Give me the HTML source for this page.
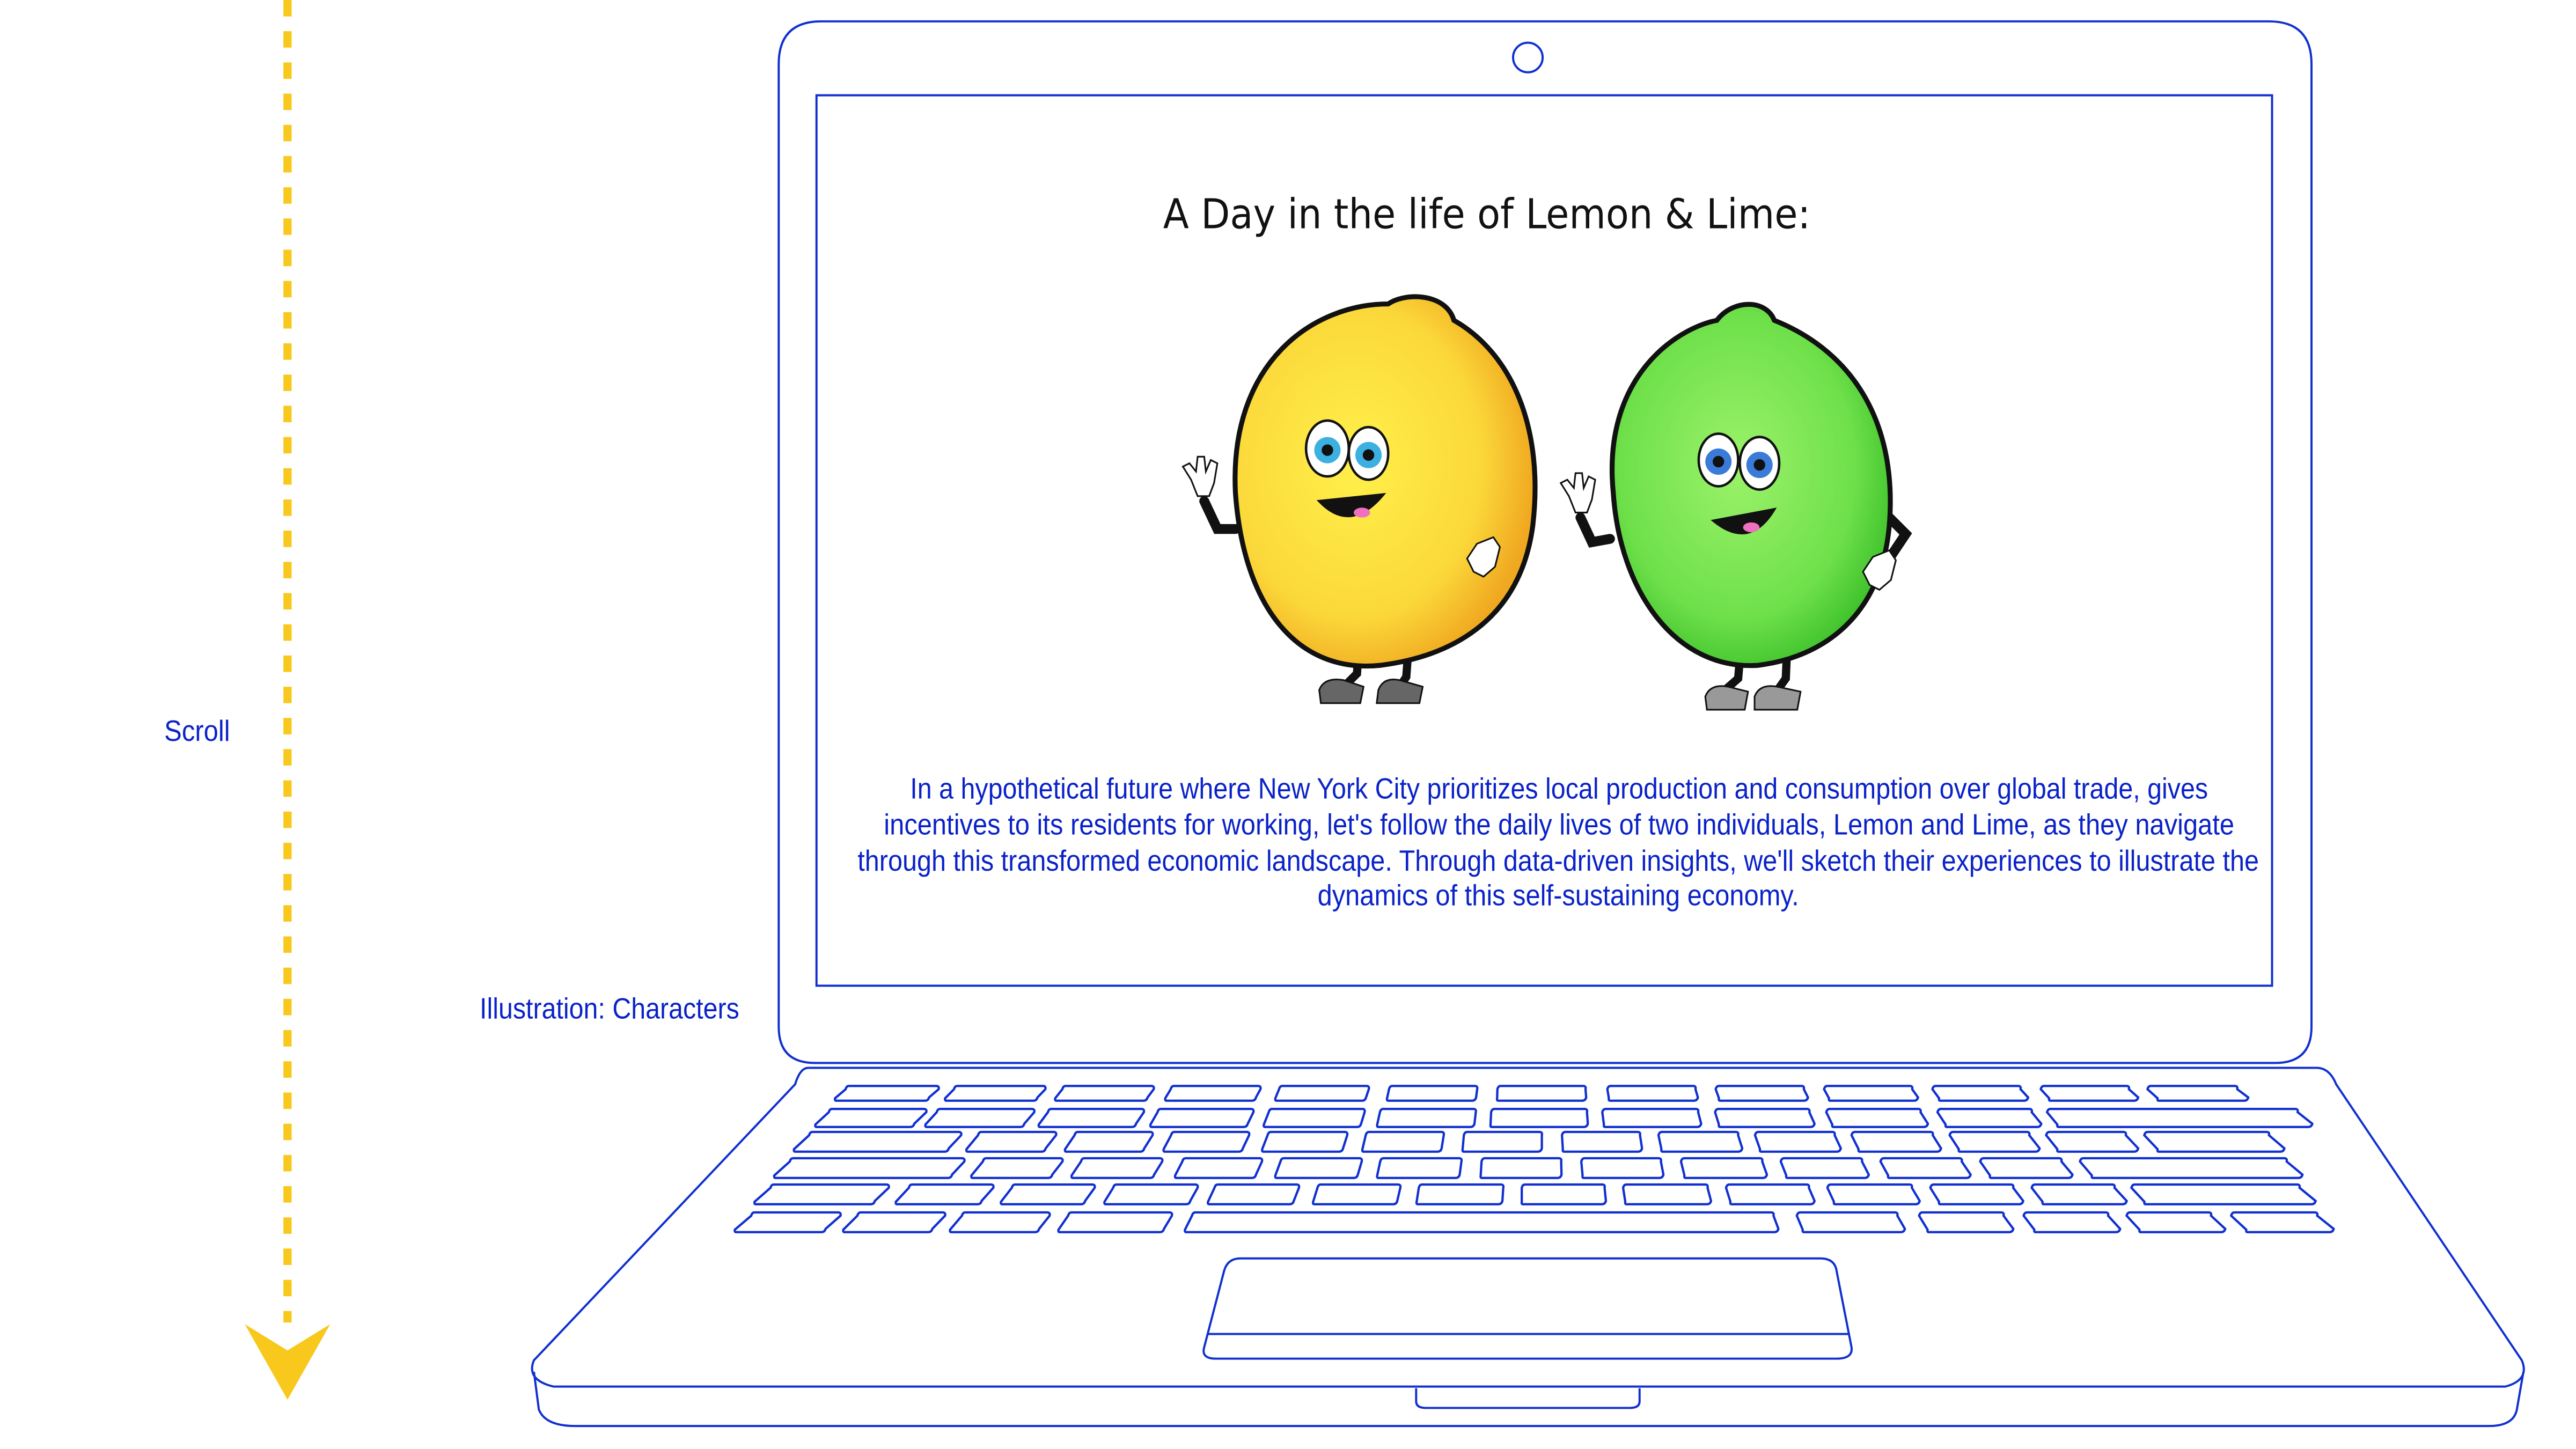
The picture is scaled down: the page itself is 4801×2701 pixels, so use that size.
<!DOCTYPE html>
<html><head><meta charset="utf-8"><style>
html,body{margin:0;padding:0;background:#fff;}
svg{display:block;}
</style></head><body>
<svg id="s" width="4801" height="2701" viewBox="0 0 1568 882" preserveAspectRatio="none" xmlns="http://www.w3.org/2000/svg">
<defs>
<radialGradient id="lg" cx="0.4" cy="0.45" r="0.6"><stop offset="0" stop-color="#fff04a"/><stop offset="0.7" stop-color="#fbd83a"/><stop offset="1" stop-color="#f0a820"/></radialGradient>
<radialGradient id="gg" cx="0.45" cy="0.45" r="0.6"><stop offset="0" stop-color="#9cf26a"/><stop offset="0.7" stop-color="#6ee04a"/><stop offset="1" stop-color="#3cc02a"/></radialGradient>
</defs>
<line x1="175" y1="0" x2="175" y2="805" stroke="#f8c81c" stroke-width="5" stroke-dasharray="10,9"/>
<polygon points="149,806 175,822 201,806 175,852" fill="#f8c81c"/>
<g font-family="'Liberation Sans Narrow','Liberation Sans',sans-serif" fill="#0a22c8" font-size="18">
<text x="100" y="451" textLength="40" lengthAdjust="spacingAndGlyphs">Scroll</text>
<text x="292" y="620" textLength="158" lengthAdjust="spacingAndGlyphs">Illustration: Characters</text>
</g>
<g fill="none" stroke="#1030d0" stroke-width="1.3">
<path d="M500,13 H1381 Q1407,13 1407,39 V625 Q1407,647 1385,647 H496 Q474,647 474,625 V39 Q474,13 500,13Z"/>
<circle cx="930" cy="35" r="9"/>
<rect x="497" y="58" width="886" height="542"/>
<path d="M492,650 H1410 Q1418,650 1422,660 L1535,828 Q1540,840 1525,844 H337 Q320,840 325,828 L484,660 Q487,650 492,650Z"/>
<path d="M325,835 L328,858 Q332,868 350,868 H1515 Q1530,868 1532,858 L1536,835"/>
<path d="M862,845 V853 Q862,857 868,857 H992 Q998,857 998,853 V845"/>
<path d="M755,766 H1108 Q1117,766 1118,774 L1127,820 Q1128,827 1118,827 H740 Q731,827 733,820 L745,774 Q747,766 755,766Z"/>
<line x1="735" y1="812" x2="1126" y2="812"/>
<g id="keys" stroke-width="1.4"></g>
</g>
<text x="905" y="139" text-anchor="middle" font-family="'DejaVu Sans','Liberation Sans',sans-serif" font-size="25" fill="#111" textLength="394" lengthAdjust="spacingAndGlyphs">A Day in the life of Lemon &amp; Lime:</text>
<g font-family="'Liberation Sans Narrow','Liberation Sans',sans-serif" fill="#0a22c8" font-size="18">
<text x="554" y="486" textLength="790" lengthAdjust="spacingAndGlyphs">In a hypothetical future where New York City prioritizes local production and consumption over global trade, gives</text>
<text x="538" y="508" textLength="822" lengthAdjust="spacingAndGlyphs">incentives to its residents for working,  let's follow the daily lives of two individuals, Lemon and Lime, as they navigate</text>
<text x="522" y="530" textLength="853" lengthAdjust="spacingAndGlyphs">through this transformed economic landscape. Through data-driven insights, we'll sketch their experiences to illustrate the</text>
<text x="802" y="551" textLength="293" lengthAdjust="spacingAndGlyphs">dynamics of this self-sustaining economy.</text>
</g>
<g stroke="#111" stroke-linecap="round">
<path d="M733,305 L741,322 L752,322" stroke-width="6" fill="none"/>
<path d="M905,305 L918,318 L905,335" stroke-width="6" fill="none"/>
<path d="M828,380 L826,410 L818,418 M858,385 L856,412 L852,418" stroke-width="5" fill="none"/>
<path d="M752,300 C748,220 800,185 845,185 C855,178 880,178 885,195 C920,215 940,260 933,320 C925,380 880,400 840,405 C790,410 757,370 752,300Z" fill="url(#lg)" stroke-width="3"/>
<path d="M725,292 l-5,-8 l4,-2 l4,5 l1,-9 l4,0 l1,9 l3,-7 l4,2 l-2,12 l-3,8 l-7,0Z" fill="#fff" stroke-width="1"/>
<path d="M893,340 l6,-9 l10,-4 l4,6 l-3,12 l-7,6 l-6,-3Z" fill="#fff" stroke-width="1"/>
<ellipse cx="808" cy="273" rx="13" ry="17" fill="#fff" stroke-width="1.5"/>
<ellipse cx="833" cy="276" rx="12" ry="16" fill="#fff" stroke-width="1.5"/>
<circle cx="808" cy="274" r="8" fill="#3cb0e0" stroke="none"/><circle cx="833" cy="277" r="8" fill="#3cb0e0" stroke="none"/>
<circle cx="808" cy="274" r="3.5" fill="#111" stroke="none"/><circle cx="833" cy="277" r="3.5" fill="#111" stroke="none"/>
<path d="M803,305 Q822,325 842,301 Z" fill="#111" stroke-width="1.5"/>
<ellipse cx="829" cy="312" rx="5" ry="3" fill="#f070c0" stroke="none"/>
<path d="M803,420 Q806,412 818,414 L830,418 L828,428 H804Z M839,420 Q842,412 852,414 L866,418 L864,428 H838Z" fill="#666" stroke-width="1"/>
</g>
<g stroke="#111" stroke-linecap="round">
<path d="M962,315 L969,330 L980,328" stroke-width="6" fill="none"/>
<path d="M1148,313 L1160,325 L1150,340" stroke-width="6" fill="none"/>
<path d="M1060,390 L1058,413 L1050,420 M1088,390 L1087,413 L1082,420" stroke-width="5" fill="none"/>
<path d="M982,300 C975,230 1020,200 1045,195 C1055,182 1075,182 1080,195 C1130,215 1155,260 1150,320 C1145,375 1110,400 1070,405 C1020,408 986,360 982,300Z" fill="url(#gg)" stroke-width="3"/>
<path d="M955,302 l-5,-8 l4,-2 l4,5 l1,-9 l4,0 l1,9 l3,-7 l4,2 l-2,12 l-3,8 l-7,0Z" fill="#fff" stroke-width="1"/>
<path d="M1134,348 l6,-9 l10,-4 l4,6 l-3,12 l-7,6 l-6,-3Z" fill="#fff" stroke-width="1"/>
<ellipse cx="1046" cy="280" rx="12" ry="16" fill="#fff" stroke-width="1.5"/>
<ellipse cx="1071" cy="282" rx="12" ry="16" fill="#fff" stroke-width="1.5"/>
<circle cx="1046" cy="281" r="8" fill="#3a7ad8" stroke="none"/><circle cx="1071" cy="283" r="8" fill="#3a7ad8" stroke="none"/>
<circle cx="1046" cy="281" r="3.5" fill="#111" stroke="none"/><circle cx="1071" cy="283" r="3.5" fill="#111" stroke="none"/>
<path d="M1043,317 Q1065,335 1080,310 Z" fill="#111" stroke-width="1.5"/>
<ellipse cx="1066" cy="321" rx="5" ry="3" fill="#f070c0" stroke="none"/>
<path d="M1038,424 Q1041,416 1052,418 L1064,421 L1062,432 H1039Z M1068,424 Q1071,416 1082,418 L1096,421 L1094,432 H1068Z" fill="#999" stroke-width="1"/>
</g>
</svg>
<script>
var rows=[
[661,670,[[508,566],[575,632],[642,699],[709,765],[776,832],[844,899],[911,966],[979,1034],[1046,1101],[1113,1168],[1180,1235],[1247,1302],[1313,1369]]],
[675,686,[[496,557],[563,624],[632,692],[700,760],[769,829],[838,898],[907,967],[976,1036],[1046,1105],[1115,1174],[1184,1243],[1252,1408]]],
[689,701,[[483,578],[588,637],[648,697],[708,757],[768,818],[829,878],[890,939],[951,1000],[1011,1061],[1071,1121],[1131,1182],[1192,1242],[1252,1302],[1313,1391]]],
[705,717,[[471,580],[591,641],[652,703],[715,765],[776,827],[838,889],[901,951],[963,1013],[1025,1076],[1087,1138],[1149,1200],[1211,1262],[1273,1402]]],
[721,733,[[459,533],[545,598],[609,661],[672,725],[735,788],[799,851],[862,915],[926,978],[989,1042],[1053,1105],[1116,1169],[1180,1232],[1243,1295],[1305,1410]]],
[738,750,[[447,503],[513,568],[578,633],[644,709],[721,1083],[1097,1160],[1173,1226],[1238,1291],[1302,1355],[1367,1421]]]
];
var g=document.getElementById('keys'),h='';
rows.forEach(function(r){var t=r[0],b=r[1],H=b-t;r[2].forEach(function(k){
var dl=(940-k[0])/48*(H/12),dr=(940-k[1])/48*(H/12);
var x1=k[0],x2=k[1];
h+='<path d="M'+(x1+dl+2)+','+t+' L'+(x2+dr-2)+','+t+' Q'+(x2+dr)+','+t+' '+(x2+dr-0.5)+','+(t+2)+' L'+(x2-0.5)+','+(b-2)+' Q'+(x2-1)+','+b+' '+(x2-3)+','+b+' L'+(x1+1)+','+b+' Q'+x1+','+b+' '+(x1+0.3)+','+(b-1.5)+' L'+(x1+dl)+','+(t+2)+' Q'+(x1+dl+0.5)+','+t+' '+(x1+dl+2)+','+t+'Z"/>';
});});
g.innerHTML=h;
</script>
</body></html>
